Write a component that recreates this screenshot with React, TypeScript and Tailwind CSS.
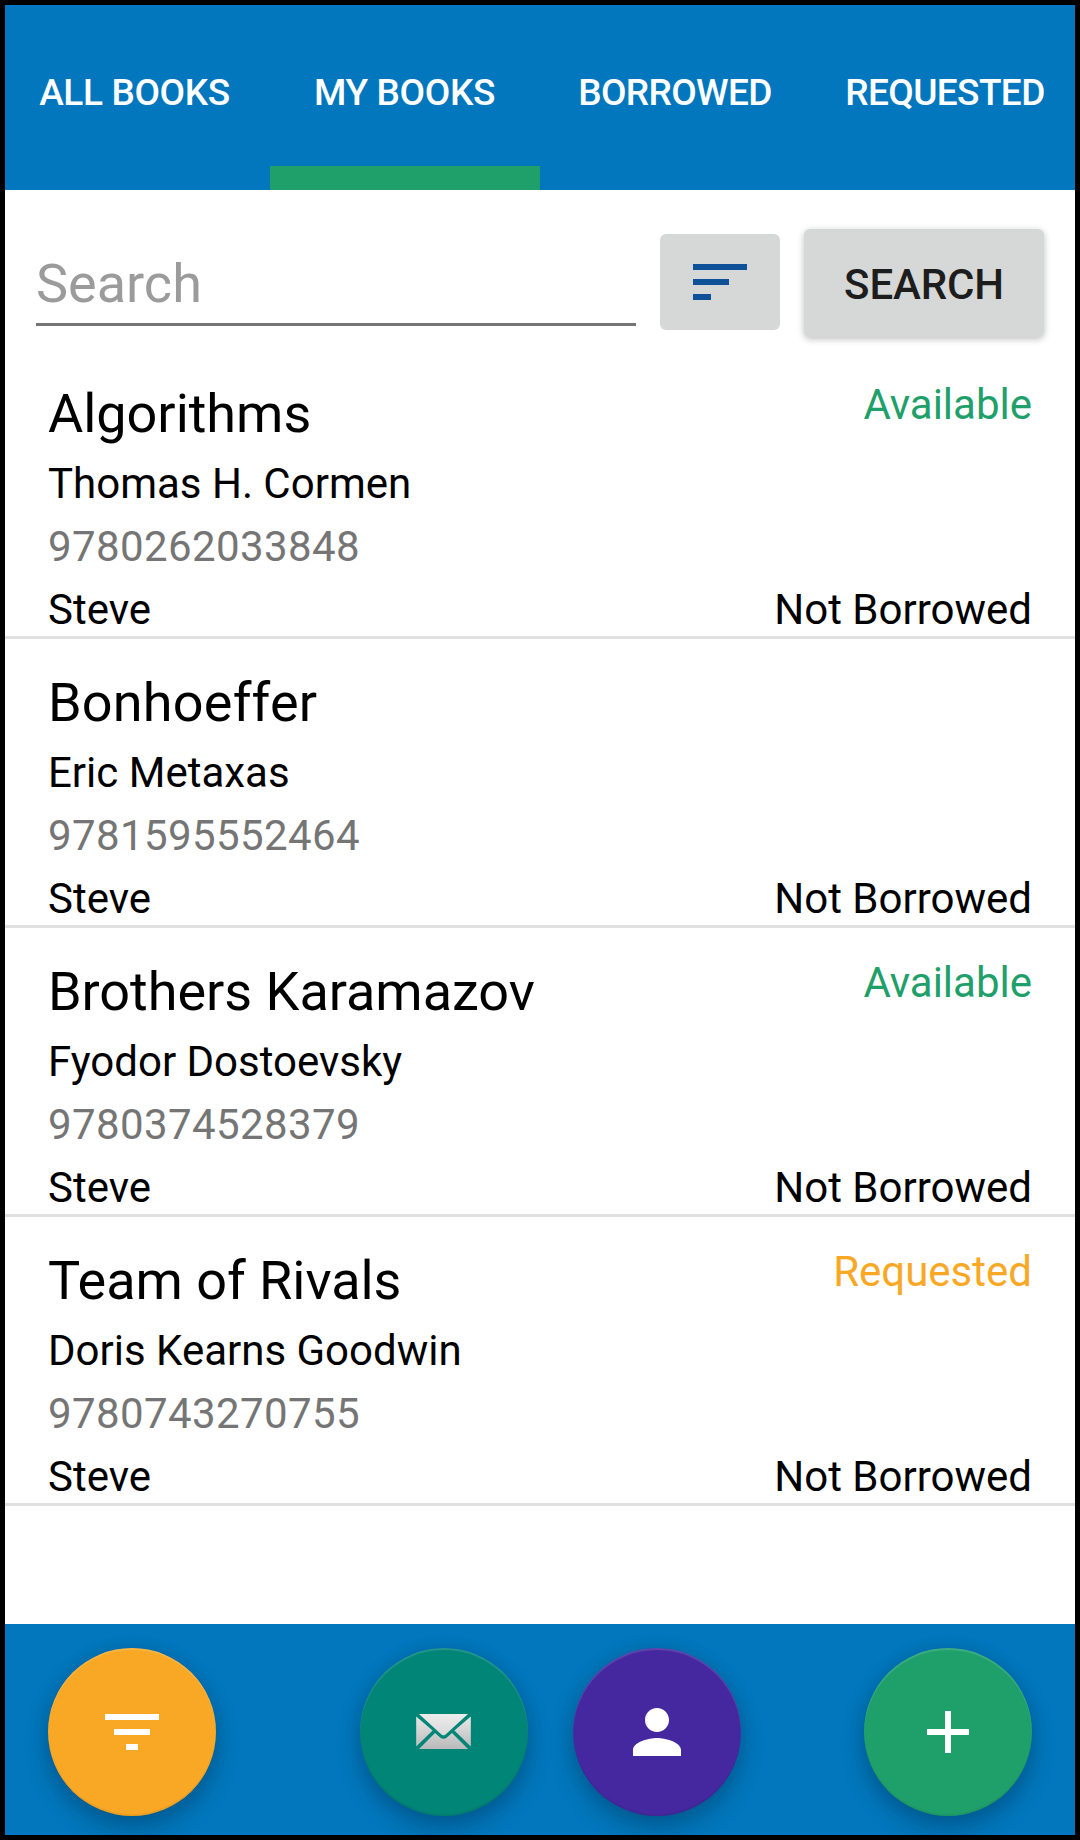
import React from "react";

type Status = "Available" | "Requested";

interface Book {
  title: string;
  author: string;
  isbn: string;
  owner: string;
  status?: Status;
}

const tabs = [
  { label: "ALL BOOKS", tracking: "tracking-[-0.35px] pr-px" },
  { label: "MY BOOKS", tracking: "tracking-[-0.35px] pr-px" },
  { label: "BORROWED", tracking: "tracking-[-0.6px]" },
  { label: "REQUESTED", tracking: "tracking-[-0.6px]" },
];

const books: Book[] = [
  { title: "Algorithms", author: "Thomas H. Cormen", isbn: "9780262033848", owner: "Steve", status: "Available" },
  { title: "Bonhoeffer", author: "Eric Metaxas", isbn: "9781595552464", owner: "Steve" },
  { title: "Brothers Karamazov", author: "Fyodor Dostoevsky", isbn: "9780374528379", owner: "Steve", status: "Available" },
  { title: "Team of Rivals", author: "Doris Kearns Goodwin", isbn: "9780743270755", owner: "Steve", status: "Requested" },
];

function TabBar() {
  return (
    <nav className="-mx-[5px] flex h-[185px] shrink-0 bg-[#0277bd]">
      {tabs.map(({ label, tracking }) => (
        <button
          key={label}
          className={`w-[270px] whitespace-nowrap text-center text-[37px] leading-[43px] font-medium text-white ${tracking} ${
            label === "MY BOOKS" ? "border-b-[24px] border-[#1fa06b] pt-[14px]" : "pb-[10px]"
          }`}
        >
          {label}
        </button>
      ))}
    </nav>
  );
}

function SearchRow() {
  return (
    <div className="flex h-[160px] shrink-0 items-start pl-[31px]">
      <div className="mt-[62px] h-[74px] w-[600px] border-b-[3px] border-[#757575]">
        <input
          className="block h-[63px] w-full text-[54px] leading-[63px] text-black outline-none placeholder:text-[#9b9b9b] placeholder:opacity-100"
          placeholder="Search"
        />
      </div>
      <button aria-label="Sort" className="mt-[44px] ml-6 flex h-24 w-[120px] items-start rounded-md bg-[#d6d7d7] pt-[30px] pl-[33px]">
        <svg width="54" height="36" viewBox="0 0 54 36" fill="#0f5199">
          <path d="M0 0h54v6H0zM0 15h36v6H0zM0 30h18v6H0z" />
        </svg>
      </button>
      <button className="mt-[39px] ml-6 h-[108px] w-[240px] rounded-md bg-[#d6d7d7] pt-[3px] text-[42px] leading-[49px] font-medium tracking-[-0.15px] text-[#1d1d1d] shadow-[0_2px_7px_rgba(0,0,0,0.26)]">
        SEARCH
      </button>
    </div>
  );
}

function BookRow({ book }: { book: Book }) {
  return (
    <li className="flex h-[289px] justify-between border-b-[3px] border-[#e0e0e0] pr-[43px] pb-[2px] pl-[43px] text-[42px] leading-[49px] text-black">
      <div className="flex flex-col gap-[14px] pt-8">
        <h2
          className={`text-[54px] leading-[63px] [font-variant-ligatures:none] ${
            book.title === "Bonhoeffer" ? "tracking-[0.2px]" : "tracking-[-0.03px]"
          }`}
        >
          {book.title}
        </h2>
        <p>{book.author}</p>
        <p className="tracking-[0.4px] text-[#757575]">{book.isbn}</p>
        <p>{book.owner}</p>
      </div>
      <div className="flex flex-col items-end justify-between pt-[30px]">
        <span className={book.status === "Requested" ? "text-[#f9a825]" : "text-[#1fa06b]"}>{book.status}</span>
        <span>Not Borrowed</span>
      </div>
    </li>
  );
}

function Fab({ label, className, children }: { label: string; className: string; children: React.ReactNode }) {
  return (
    <button
      aria-label={label}
      className={`flex size-[168px] shrink-0 items-center justify-center rounded-full shadow-[0_12px_24px_rgba(0,0,0,0.22),0_0_18px_rgba(0,0,0,0.08),inset_0_2px_1px_rgba(255,255,255,0.14),inset_0_-2px_1px_rgba(0,0,0,0.06)] ${className}`}
    >
      {children}
    </button>
  );
}

function MailIcon() {
  return (
    <svg width="72" height="72" viewBox="0 0 72 72">
      <defs>
        <linearGradient id="flap" x1="0" y1="0" x2="0" y2="1">
          <stop offset="0" stopColor="#ececec" />
          <stop offset="1" stopColor="#d9d9d9" />
        </linearGradient>
        <linearGradient id="body" gradientUnits="userSpaceOnUse" x1="0" y1="18" x2="0" y2="53">
          <stop offset="0" stopColor="#ebebeb" />
          <stop offset="1" stopColor="#bababa" />
        </linearGradient>
      </defs>
      <path d="M11 18h49L37.6 38.4q-2.1 1.8-4.2 0z" fill="url(#flap)" />
      <path d="M8.2 20.6L24.6 34.4 8.2 50.4z" fill="url(#body)" />
      <path d="M62.8 20.6L46.4 34.4 62.8 50.4z" fill="url(#body)" />
      <path d="M11 53L27 37l4.8 4.2q3.7 3 7.4 0L44 37l16 16z" fill="url(#body)" />
    </svg>
  );
}

function BottomBar() {
  return (
    <footer className="flex h-[211px] shrink-0 items-start overflow-hidden bg-[#0277bd] pt-6 pl-[43px]">
      <Fab label="Filter" className="bg-[#f9a825]">
        <svg width="54" height="36" viewBox="0 0 54 36" fill="white">
          <path d="M0 0h54v6H0zM9 15h36v6H9zM21 30h12v6H21z" />
        </svg>
      </Fab>
      <Fab label="Messages" className="ml-36 bg-[#018577]">
        <MailIcon />
      </Fab>
      <Fab label="Profile" className="ml-[45px] bg-[#45289f]">
        <svg width="48" height="48" viewBox="4 4 16 16" fill="white">
          <path d="M12 12c2.21 0 4-1.79 4-4s-1.79-4-4-4-4 1.79-4 4 1.79 4 4 4zm0 2c-2.67 0-8 1.34-8 4v2h16v-2c0-2.66-5.33-4-8-4z" />
        </svg>
      </Fab>
      <Fab label="Add book" className="ml-[123px] bg-[#1fa06b]">
        <svg width="42" height="42" viewBox="0 0 42 42" fill="white">
          <path d="M18 0h6v18h18v6H24v18h-6V24H0v-6h18z" />
        </svg>
      </Fab>
    </footer>
  );
}

export default function App() {
  return (
    <main className="flex h-[1840px] w-[1080px] flex-col overflow-hidden border-[5px] border-black bg-white font-[Roboto,sans-serif]">
      <TabBar />
      <SearchRow />
      <ul className="flex-1">
        {books.map((book) => (
          <BookRow key={book.isbn} book={book} />
        ))}
      </ul>
      <BottomBar />
    </main>
  );
}
